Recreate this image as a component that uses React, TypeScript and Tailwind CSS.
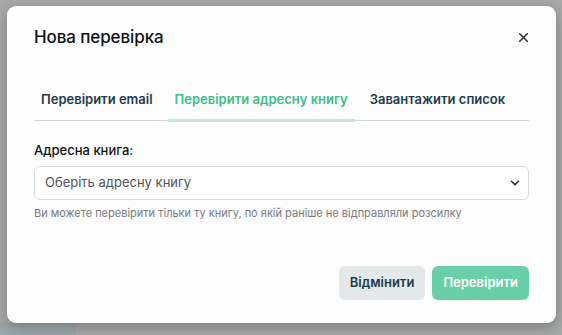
import { X, ChevronDown } from 'lucide-react';

export default function App() {
  const tabs = ['Перевірити email', 'Перевірити адресну книгу', 'Завантажити список'];
  const active = 1;

  return (
    <div className="relative w-[562px] h-[335px] overflow-hidden bg-[#a7a8a8] font-['Inter',sans-serif]">
      {/* underlying page hint */}
      <div className="absolute left-0 bottom-0 w-[76px] h-[12px] bg-[#9ba6a8]" />

      <div className="relative ml-[7px] mt-[6px] w-[549px] h-[317px] rounded-[9px] bg-[#fdfdfe] shadow-[0_4px_14px_rgba(0,0,0,0.25)] px-[27px] flex flex-col">
        {/* Header */}
        <div className="flex items-center justify-between h-[62px] pt-[1px]">
          <h2 className="text-[17px] font-medium text-[#111] tracking-[-0.1px]">Нова перевірка</h2>
          <X className="w-[15px] h-[15px] text-[#333] mr-[-2px]" strokeWidth={2.6} />
        </div>

        {/* Tabs */}
        <div className="mt-[22px] flex gap-[8px] border-b border-[#d4d7d9]">
          {tabs.map((t, i) => (
            <div
              key={t}
              className={
                i === active
                  ? 'whitespace-nowrap px-[7px] pb-[9px] text-[13px] font-semibold text-[#3cbd8a] border-b-[3px] border-[#bfe9d8] mb-[-2px]'
                  : 'whitespace-nowrap px-[7px] pb-[9px] text-[13px] font-semibold text-[#1e3b4c] mb-[-2px] border-b-[3px] border-transparent'
              }
            >
              {t}
            </div>
          ))}
        </div>

        {/* Field */}
        <label className="mt-[20px] text-[13px] font-medium text-[#111]">Адресна книга:</label>
        <div className="mt-[6px] h-[34px] rounded-[6px] border border-[#d7dbde] bg-white flex items-center justify-between pl-[10px] pr-[6px]">
          <span className="text-[13px] text-[#505458]">Оберіть адресну книгу</span>
          <ChevronDown className="w-[14px] h-[14px] text-[#333]" strokeWidth={3} />
        </div>
        <p className="mt-[5px] text-[11px] text-[#777b7e]">
          Ви можете перевірити тільки ту книгу, по якій раніше не відправляли розсилку
        </p>

        {/* Footer */}
        <div className="mt-auto mb-[23px] flex justify-end gap-[7px]">
          <button className="h-[34px] px-[11px] rounded-[6px] bg-[#e3e8ea] text-[13px] font-semibold text-[#1e3b4c]">
            Відмінити
          </button>
          <button className="h-[34px] px-[11px] rounded-[6px] bg-[#68cfa9] text-[13px] font-semibold text-white">
            Перевірити
          </button>
        </div>
      </div>
    </div>
  );
}
